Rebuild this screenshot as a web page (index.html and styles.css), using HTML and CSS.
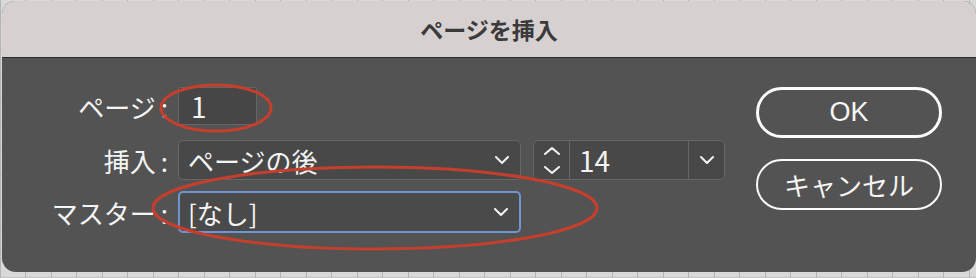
FILE: index.html
```html
<!DOCTYPE html>
<html lang="ja">

<head>
  <meta charset="UTF-8" />
  <title>ページを挿入</title>
  <link rel="stylesheet" href="styles.css">
</head>

<body>

  <div class="dialog">
    <div class="titlebar">ページを挿入</div>

    <div class="content">
      <div class="form">
        <div class="row">
          <label class="lbl">ページ<span class="colon">:</span></label>
          <div class="field page-num">1</div>
        </div>

        <div class="row row-insert">
          <label class="lbl">挿入<span class="colon">:</span></label>
          <div class="select">
            <span>ページの後</span>
            <svg class="chev" width="14" height="8" viewBox="0 0 14 8"><polyline points="1,1 7,7 13,1" /></svg>
          </div>
          <div class="combo">
            <div class="stepper">
              <svg width="16" height="8" viewBox="0 0 16 8"><polyline points="1,7 8,1 15,7" /></svg>
              <svg width="16" height="8" viewBox="0 0 16 8"><polyline points="1,1 8,7 15,1" /></svg>
            </div>
            <div class="combo-value">14</div>
            <div class="combo-btn">
              <svg class="chev" width="14" height="8" viewBox="0 0 14 8"><polyline points="1,1 7,7 13,1" /></svg>
            </div>
          </div>
        </div>

        <div class="row row-master">
          <label class="lbl">マスター<span class="colon">:</span></label>
          <div class="select focused">
            <span>[なし]</span>
            <svg class="chev" width="14" height="8" viewBox="0 0 14 8"><polyline points="1,1 7,7 13,1" /></svg>
          </div>
        </div>
      </div>

      <div class="buttons">
        <button class="btn btn-default">OK</button>
        <button class="btn">キャンセル</button>
      </div>
    </div>
  </div>

  <!-- red marks drawn over the screenshot -->
  <svg class="marks" width="976" height="278" viewBox="0 0 976 278">
    <ellipse cx="216" cy="108" rx="55" ry="23" />
    <ellipse cx="375" cy="208" rx="222" ry="41" />
  </svg>

</body>
</html>
```

FILE: styles.css
```css
body {
  margin: 0;
  width: 976px;
  height: 278px;
  overflow: hidden;
  position: relative;
  font-family: "Noto Sans CJK JP", "Noto Sans", sans-serif;
  background-color: #d9d9d9;
  background-image:
    repeating-linear-gradient(90deg, #b4b4b4 0 1px, transparent 1px 25.5px),
    repeating-linear-gradient(0deg, #c4c4c4 0 1px, transparent 1px 25.5px);
}

.dialog {
  margin: 1px 0 0 2px;
  width: 974px;
  height: 271px;
  background: #535353;
  border-radius: 13px 13px 14px 14px;
  overflow: hidden;
  display: flex;
  flex-direction: column;
}

.titlebar {
  height: 56px;
  background: #d7d0d1;
  border-bottom: 1px solid #2e2e2e;
  color: #3a3a3a;
  font-size: 23px;
  font-weight: bold;
  display: flex;
  align-items: center;
  justify-content: center;
}

.content {
  display: flex;
  justify-content: space-between;
  padding: 29px 34px 0 0;
}

.row {
  display: flex;
  align-items: center;
}

.row-insert {
  margin-top: 15px;
}

.row-master {
  margin-top: 11px;
}

.lbl {
  width: 166px;
  margin-right: 10px;
  text-align: right;
  color: #f4f4f4;
  font-size: 26px;
}

.colon {
  display: inline-block;
  margin-left: 5px;
}

.field {
  box-sizing: border-box;
  height: 38px;
  background: #464646;
  border: 1px solid #666;
  border-radius: 2px;
  color: #f4f4f4;
  font-family: "Noto Sans CJK JP", "Noto Sans", sans-serif;
  font-size: 28px;
  display: flex;
  align-items: center;
}

.page-num {
  width: 79px;
  padding-left: 12px;
}

.select {
  box-sizing: border-box;
  width: 343px;
  height: 40px;
  background: #484848;
  border: 1px solid #676767;
  border-radius: 5px;
  padding: 0 11px 0 9px;
  color: #f4f4f4;
  font-size: 26px;
  display: flex;
  align-items: center;
  justify-content: space-between;
}

.select.focused {
  height: 42px;
  border: 2px solid #7195d3;
  padding-left: 8px;
  background: #4a4a4a;
}

svg polyline {
  fill: none;
  stroke: #f4f4f4;
  stroke-width: 2;
  stroke-linecap: round;
  stroke-linejoin: round;
}

.combo {
  box-sizing: border-box;
  margin-left: 12px;
  width: 192px;
  height: 40px;
  border: 1px solid #676767;
  border-radius: 5px;
  background: #484848;
  display: flex;
  overflow: hidden;
}

.stepper {
  width: 35px;
  border-right: 1px solid #676767;
  display: flex;
  flex-direction: column;
  align-items: center;
  justify-content: center;
  gap: 11px;
}

.combo-value {
  flex: 1;
  padding-left: 9px;
  color: #f4f4f4;
  font-size: 28px;
  display: flex;
  align-items: center;
}

.combo-btn {
  width: 35px;
  border-left: 1px solid #676767;
  display: flex;
  align-items: center;
  justify-content: center;
}

.buttons {
  display: flex;
  flex-direction: column;
  gap: 21px;
}

.btn {
  box-sizing: border-box;
  width: 186px;
  height: 51px;
  border: 2px solid #fafafa;
  border-radius: 26px;
  background: transparent;
  color: #f6f6f6;
  font-family: "Noto Sans CJK JP", "Noto Sans", sans-serif;
  font-size: 26px;
  padding: 0;
}

.btn-default {
  border-width: 3px;
  font-family: "Liberation Sans", "Noto Sans", sans-serif;
  font-size: 27px;
}

.marks {
  position: absolute;
  left: 0;
  top: 0;
  pointer-events: none;
}

.marks ellipse {
  fill: none;
  stroke: #c63f2d;
  stroke-width: 3;
}
```
